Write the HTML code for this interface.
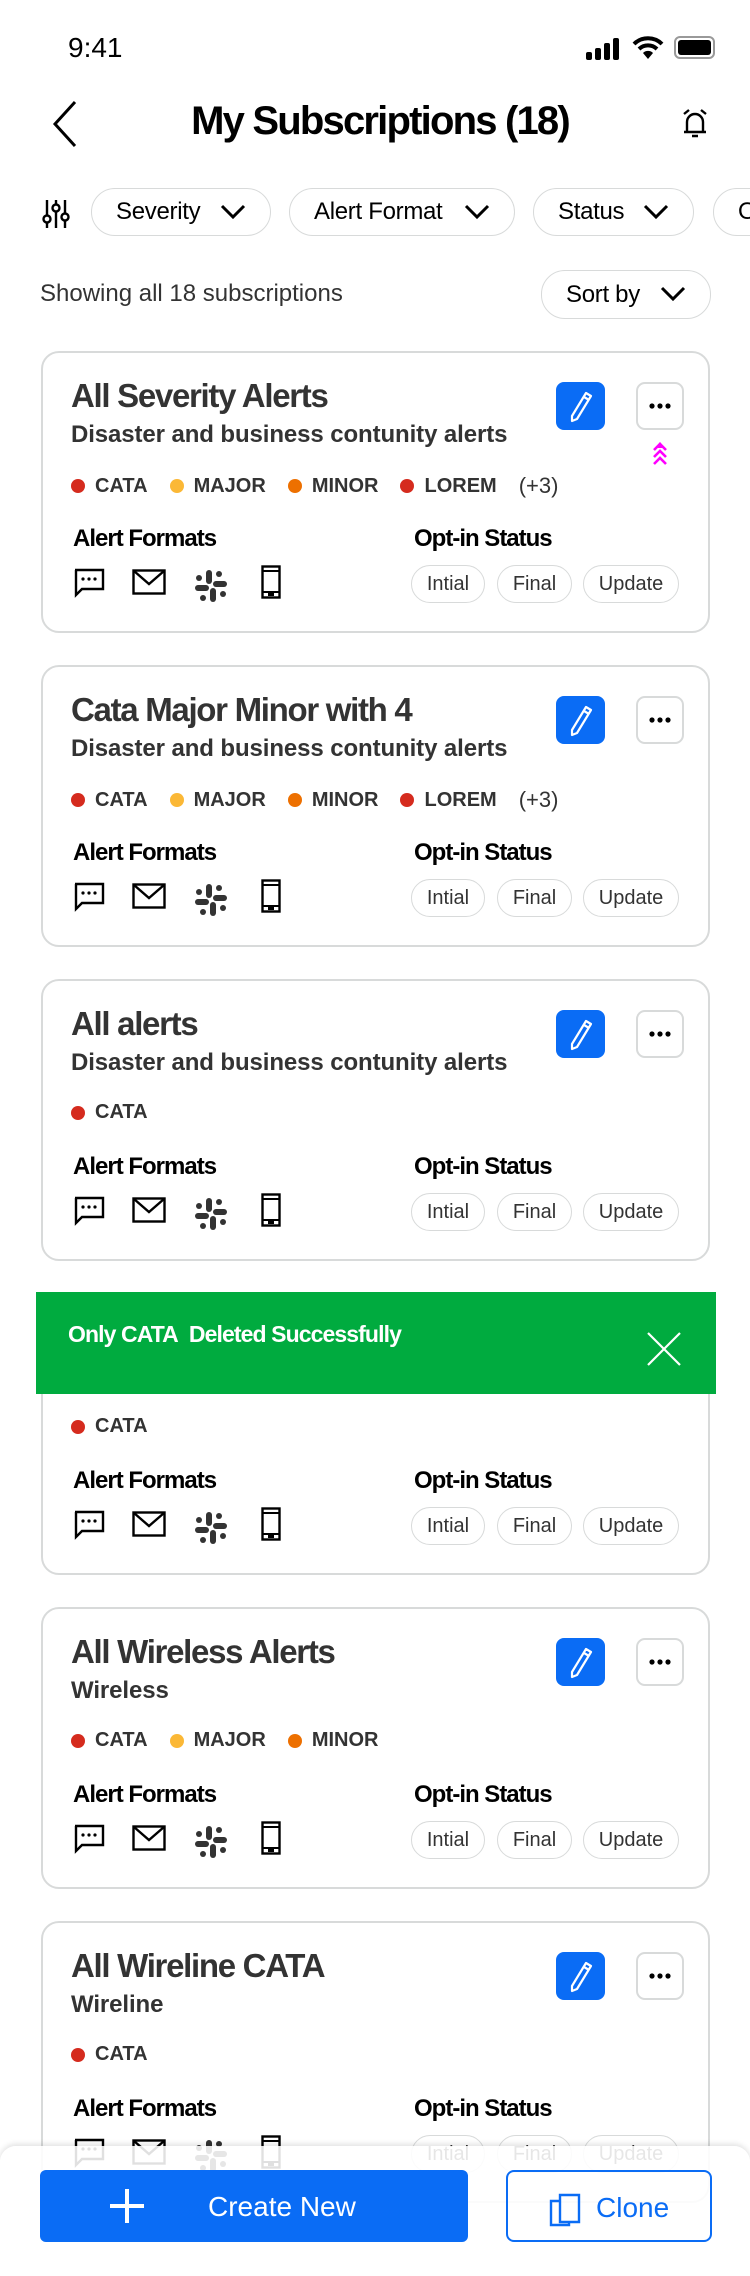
<!DOCTYPE html>
<html><head><meta charset="utf-8"><style>
*{margin:0;padding:0;box-sizing:border-box}
body{width:750px;height:2264px;background:#fff;position:relative;overflow:hidden;font-family:"Liberation Sans",sans-serif;color:#000}
.a{position:absolute}
.pill{position:absolute;height:48px;border:1.5px solid #d8dada;border-radius:24px;font-size:24px;color:#000;display:flex;align-items:center;padding-left:24px;letter-spacing:-0.3px}
.pill svg{position:absolute;right:24px;top:14px}
.card{position:absolute;left:41px;width:669px;height:282px;border:2px solid #d8dada;border-radius:18px;background:#fff}
.t{position:absolute;left:28px;top:24px;font-size:33px;font-weight:bold;color:#333;letter-spacing:-1.3px}
.st{position:absolute;left:28px;top:68px;font-size:24px;font-weight:bold;color:#333;letter-spacing:-0.1px}
.sev{position:absolute;left:28px;top:120px;font-size:20px;font-weight:bold;color:#333;display:flex;align-items:center;white-space:nowrap}
.sev i{display:inline-block;width:14px;height:14px;border-radius:50%;margin-right:10px}
.sev span{margin-right:22px}
.lab{position:absolute;top:172px;font-size:24px;font-weight:bold;letter-spacing:-1px}
.chip{position:absolute;top:212px;height:38px;border:1.5px solid #d8dada;border-radius:19px;font-size:20px;color:#333;display:flex;align-items:center;justify-content:center}
.ed{position:absolute;left:513px;top:29px;width:49px;height:48px;background:#0a6cf5;border-radius:8px}
.mo{position:absolute;left:593px;top:29px;width:48px;height:48px;border:2px solid #d8dada;border-radius:9px}
.ic{position:absolute;top:214px}
</style></head><body>
<div class="a" style="left:68px;top:32px;font-size:28px;color:#000">9:41</div>
<svg class="a" style="left:586px;top:38px" width="36" height="22"><rect x="0" y="14" width="6" height="8" rx="2"/><rect x="9" y="10" width="6" height="12" rx="2"/><rect x="18" y="5" width="6" height="17" rx="2"/><rect x="27" y="0" width="6" height="22" rx="2"/></svg>
<svg class="a" style="left:632px;top:36px" width="32" height="24" viewBox="0 0 32 24"><path d="M2 8 A20 20 0 0 1 30 8" stroke="#000" stroke-width="4" fill="none"/><path d="M7 13 A13 13 0 0 1 25 13" stroke="#000" stroke-width="4" fill="none"/><path d="M16 23 L11 17 A7 7 0 0 1 21 17 Z"/></svg>
<div class="a" style="left:674px;top:36px;width:41px;height:23px;border:2px solid #999;border-radius:6px;padding:2px"><div style="background:#000;width:100%;height:100%;border-radius:3px"></div></div>
<svg class="a" style="left:52px;top:100px" width="26" height="48"><path d="M23 2 L3 24 L23 46" stroke="#000" stroke-width="3" fill="none"/></svg>
<div class="a" style="left:0;width:750px;text-align:center;top:99px;font-size:40px;font-weight:bold;letter-spacing:-1.8px;padding-left:10px">My Subscriptions (18)</div>
<svg class="a" style="left:681px;top:108px" width="28" height="32" viewBox="0 0 28 32"><path d="M6 24 V14 A8 8 0 0 1 22 14 V24 Z M3 24 H25 M11 28 H17 M3 6 L8 2 M25 6 L20 2" stroke="#000" stroke-width="2.4" fill="none"/></svg>
<svg class="a" style="left:42px;top:198px" width="28" height="32" viewBox="0 0 28 32"><g stroke="#000" stroke-width="2.4" fill="none"><path d="M5 2V30M14 2V30M23 2V30"/><circle cx="5" cy="21" r="3.5" fill="#fff"/><circle cx="14" cy="10" r="3.5" fill="#fff"/><circle cx="23" cy="19" r="3.5" fill="#fff"/></g></svg>
<div class="pill" style="left:91px;top:188px;width:180px">Severity<svg width="26" height="18"><path d="M2 3 L13 14 L24 3" stroke="#000" stroke-width="3" fill="none"/></svg></div>
<div class="pill" style="left:289px;top:188px;width:226px">Alert Format<svg width="26" height="18"><path d="M2 3 L13 14 L24 3" stroke="#000" stroke-width="3" fill="none"/></svg></div>
<div class="pill" style="left:533px;top:188px;width:161px">Status<svg width="26" height="18"><path d="M2 3 L13 14 L24 3" stroke="#000" stroke-width="3" fill="none"/></svg></div>
<div class="pill" style="left:713px;top:188px;width:100px">O</div>
<div class="a" style="left:40px;top:280px;font-size:24px;color:#333">Showing all 18 subscriptions</div>
<div class="pill" style="left:541px;top:270px;width:170px;height:49px">Sort by<svg width="26" height="18"><path d="M2 3 L13 14 L24 3" stroke="#000" stroke-width="3" fill="none"/></svg></div>

<div id="cards"></div>
<script>
var data=[
[351,"All Severity Alerts","Disaster and business contunity alerts",4,true],
[665,"Cata Major Minor with 4","Disaster and business contunity alerts",4,false],
[979,"All alerts","Disaster and business contunity alerts",1,false],
[1293,"","",1,false],
[1607,"All Wireless Alerts","Wireless",3,false],
[1921,"All Wireline CATA","Wireline",1,false]];
var sv=[["#d52b1e","CATA"],["#fbb836","MAJOR"],["#ed7000","MINOR"],["#d52b1e","LOREM"]];
var icons='<svg class="ic" style="left:30px" width="32" height="32" viewBox="0 0 32 32"><path d="M2 3H30V22H9L3 28V3Z" stroke="#000" stroke-width="2.4" fill="none" stroke-linejoin="miter"/><circle cx="10" cy="12" r="1.6"/><circle cx="16" cy="12" r="1.6"/><circle cx="22" cy="12" r="1.6"/></svg>'+
'<svg class="ic" style="left:89px;top:216px" width="34" height="26" viewBox="0 0 34 26"><rect x="1.5" y="1.5" width="31" height="23" stroke="#000" stroke-width="2.4" fill="none"/><path d="M2 2L17 15L32 2" stroke="#000" stroke-width="2.4" fill="none"/></svg>'+
'<svg class="ic" style="left:151px;top:216px" width="34" height="34" viewBox="0 0 34 34" fill="#333"><rect x="12" y="1" width="6" height="14" rx="3"/><rect x="19" y="12" width="14" height="6" rx="3"/><rect x="16" y="19" width="6" height="14" rx="3"/><rect x="1" y="16" width="14" height="6" rx="3"/><circle cx="25" cy="5" r="3"/><circle cx="29" cy="25" r="3"/><circle cx="9" cy="29" r="3"/><circle cx="5" cy="9" r="3"/></svg>'+
'<svg class="ic" style="left:218px;top:212px" width="20" height="34" viewBox="0 0 20 34"><rect x="1.5" y="1.5" width="17" height="31" stroke="#000" stroke-width="2.4" fill="none"/><path d="M2 6H18M2 27H18" stroke="#000" stroke-width="2"/><rect x="7" y="28" width="6" height="3"/></svg>';
var h='';
data.forEach(function(d){
 h+='<div class="card" style="top:'+d[0]+'px">';
 if(d[1]){
 h+='<div class="t">'+d[1]+'</div><div class="st">'+d[2]+'</div>';
 h+='<div class="ed"><svg width="49" height="48" viewBox="0 0 49 48"><path d="M30 11 L35 14 L21 37 L16 39 L16 34 Z M28 15 L33 18" stroke="#fff" stroke-width="2.2" fill="none" stroke-linejoin="round"/></svg></div>';
 h+='<div class="mo"><svg width="44" height="44"><circle cx="14" cy="22" r="2.6"/><circle cx="22" cy="22" r="2.6"/><circle cx="30" cy="22" r="2.6"/></svg></div>';
 }
 if(d[4]) h+='<svg class="a" style="left:609px;top:88px" width="16" height="26" viewBox="0 0 16 26"><path d="M2 9L8 3L14 9M2 16L8 10L14 16M2 23L8 17L14 23" stroke="#f0f" stroke-width="2.6" fill="none"/><path d="M3 7L8 1L13 7Z" fill="#f0f"/></svg>';
 h+='<div class="sev">';
 for(var i=0;i<d[3];i++) h+='<i style="background:'+sv[i][0]+'"></i><span>'+sv[i][1]+'</span>';
 if(d[3]==4) h+='<span style="font-weight:normal;font-size:22px">(+3)</span>';
 h+='</div>';
 h+='<div class="lab" style="left:30px">Alert Formats</div><div class="lab" style="left:371px">Opt-in Status</div>';
 h+=icons;
 h+='<div class="chip" style="left:368px;width:74px">Intial</div><div class="chip" style="left:454px;width:75px">Final</div><div class="chip" style="left:540px;width:96px">Update</div>';
 h+='</div>';
});
document.getElementById('cards').innerHTML=h;
</script>
<div class="a" style="left:36px;top:1292px;width:680px;height:102px;background:#00ab3f"></div>
<div class="a" style="left:68px;top:1321px;font-size:23px;font-weight:bold;color:#fff;letter-spacing:-0.9px">Only CATA&nbsp; Deleted Successfully</div>
<svg class="a" style="left:647px;top:1332px" width="34" height="34"><path d="M1 1L33 33M33 1L1 33" stroke="#fff" stroke-width="2.2"/></svg>

<div class="a" style="left:0;top:2146px;width:750px;height:130px;background:rgba(255,255,255,0.88);border-radius:16px 16px 0 0;box-shadow:0 -2px 6px rgba(0,0,0,0.12)"></div>
<div class="a" style="left:40px;top:2170px;width:428px;height:72px;background:#0a6cf5;border-radius:6px;color:#fff;font-size:28px"><svg class="a" style="left:70px;top:19px" width="34" height="34"><path d="M17 0V34M0 17H34" stroke="#fff" stroke-width="4"/></svg><div class="a" style="left:168px;top:21px">Create New</div></div>
<div class="a" style="left:506px;top:2170px;width:206px;height:72px;border:2px solid #0a6cf5;border-radius:8px;color:#0a6cf5;font-size:28px"><svg class="a" style="left:40px;top:17px" width="34" height="38" viewBox="0 0 34 38"><path d="M12 6H31V33H12Z M12 12H3V36H21V33" stroke="#0a6cf5" stroke-width="2.4" fill="none"/></svg><div class="a" style="left:88px;top:20px">Clone</div></div>
</body></html>
